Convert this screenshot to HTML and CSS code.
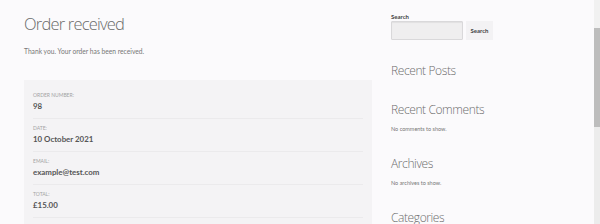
FILE: index.html
```html
<!DOCTYPE html>
<html lang="en">
<head>
    <meta charset="UTF-8">
    <title>Order received</title>
    <link rel="stylesheet" href="styles.css">
</head>
<body>

<div class="page">
    <div class="content">
        <h1 class="entry-title">Order received</h1>
        <p class="thankyou">Thank you. Your order has been received.</p>

        <ul class="order-overview">
            <li>
                <span class="label">Order number:</span>
                <strong>98</strong>
            </li>
            <li>
                <span class="label">Date:</span>
                <strong>10 October 2021</strong>
            </li>
            <li>
                <span class="label">Email:</span>
                <strong>example@test.com</strong>
            </li>
            <li>
                <span class="label">Total:</span>
                <strong>&pound;15.00</strong>
            </li>
        </ul>
    </div>

    <div class="sidebar">
        <div class="widget search">
            <label class="search-label">Search</label>
            <div class="search-row">
                <input class="search-field" type="search">
                <button class="search-btn">Search</button>
            </div>
        </div>
        <div class="widget">
            <h2>Recent Posts</h2>
        </div>
        <div class="widget">
            <h2>Recent Comments</h2>
            <p>No comments to show.</p>
        </div>
        <div class="widget">
            <h2>Archives</h2>
            <p>No archives to show.</p>
        </div>
        <div class="widget">
            <h2>Categories</h2>
        </div>
    </div>

    <div class="scrollbar">
        <div class="track-top"></div>
        <div class="thumb"></div>
    </div>
</div>

</body>
</html>
```

FILE: styles.css
```css
body, h1, h2, p, ul {
    margin: 0;
    padding: 0;
}
body {
    font-family: Lato, "Open Sans", sans-serif;
    background-color: #fbfafc;
    color: #6d6d6d;
    overflow: hidden;
}
.page {
    display: flex;
    height: 224px;
    overflow: hidden;
}
.content {
    width: 348px;
    margin-left: 24px;
    padding-top: 11px;
}
.entry-title {
    font-family: "Open Sans", Lato, sans-serif;
    font-size: 16.5px;
    font-weight: 300;
    line-height: 25px;
    letter-spacing: -0.8px;
    color: #6a6a6a;
}
.thankyou {
    margin-top: 11px;
    font-size: 6.7px;
    line-height: 8px;
    color: #777;
}
.order-overview {
    list-style: none;
    margin-top: 25px;
    padding: 6px 9px 0;
    background-color: #f4f3f5;
    height: 145px;
    box-sizing: border-box;
}
.order-overview li {
    display: flex;
    flex-direction: column;
    height: 33px;
    padding-top: 5px;
    border-bottom: 1px solid #ebeaec;
    box-sizing: border-box;
}
.order-overview .label {
    font-size: 5px;
    line-height: 8px;
    text-transform: uppercase;
    color: #a3a3a3;
}
.order-overview strong {
    margin-top: 1px;
    font-size: 7.9px;
    line-height: 12px;
    font-weight: 700;
    color: #555;
}
.sidebar {
    width: 203px;
    margin-left: 19px;
    padding-top: 13px;
}
.widget {
    margin-bottom: 23px;
}
.widget.search {
    margin-bottom: 23px;
}
.search-label {
    display: block;
    font-size: 6px;
    line-height: 8px;
    font-weight: 700;
    color: #444;
}
.search-row {
    display: flex;
    gap: 3px;
}
.search-field {
    width: 72px;
    height: 19px;
    margin: 0;
    padding: 0;
    box-sizing: border-box;
    background-color: #efeeef;
    border: 1px solid #d9d8da;
    border-radius: 1px;
    box-shadow: inset 0 1px 1px rgba(0, 0, 0, 0.06);
}
.search-btn {
    width: 27px;
    height: 19px;
    margin: 0;
    padding: 0;
    font-family: Lato, sans-serif;
    font-size: 6px;
    font-weight: 700;
    color: #444;
    background-color: #f3f2f4;
    border: none;
}
.widget h2 {
    font-family: "Open Sans", Lato, sans-serif;
    font-size: 12px;
    font-weight: 300;
    line-height: 16px;
    letter-spacing: -0.4px;
    color: #6d6d6d;
}
.widget p {
    margin: 7px 0 3px;
    font-size: 5.5px;
    line-height: 8px;
    color: #777;
}
.scrollbar {
    flex: none;
    width: 6px;
    margin-left: auto;
    background-color: #ececec;
}
.track-top {
    height: 28px;
    background-color: #f1f1f1;
}
.thumb {
    height: 99px;
    background-color: #bdbdbd;
}
```
